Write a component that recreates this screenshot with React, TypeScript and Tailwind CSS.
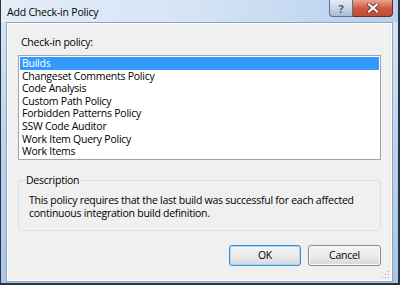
import React from "react";

const policies = [
  "Builds",
  "Changeset Comments Policy",
  "Code Analysis",
  "Custom Path Policy",
  "Forbidden Patterns Policy",
  "SSW Code Auditor",
  "Work Item Query Policy",
  "Work Items",
];

function ResizeGrip() {
  const dots = [
    [6, 0],
    [3, 3],
    [6, 3],
    [0, 6],
    [3, 6],
    [6, 6],
  ];
  return (
    <svg width="8" height="8" viewBox="0 0 8 8" className="absolute bottom-[2px] right-[2px]">
      {dots.map(([x, y]) => (
        <g key={`${x}-${y}`}>
          <rect x={x + 1} y={y + 1} width="1" height="1" fill="#ffffff" />
          <rect x={x} y={y} width="1" height="1" fill="#a0a0a0" />
        </g>
      ))}
    </svg>
  );
}

export default function App() {
  return (
    <div
      className="relative flex h-[285px] w-[400px] flex-col overflow-hidden border-b-[2px] border-l-[1px] border-r-[2px] border-[#2a3440] bg-gradient-to-b from-[#d9e7f6] via-[#bcd3ee] to-[#a9c6ea]"
      style={{ fontFamily: '"Open Sans", "Noto Sans", sans-serif' }}
    >
      {/* title bar */}
      <div className="flex h-[22px] shrink-0 items-start justify-between bg-gradient-to-r from-[#e4edf8] via-[#d4e3f4] to-[#b5cfee]">
        <span className="pl-[6px] pt-[5px] text-[10.5px] leading-[14px] tracking-[-0.2px] text-black">
          Add Check-in Policy
        </span>
        <div className="mr-[5px] flex">
          <button
            type="button"
            className="flex h-[17px] w-[24px] items-center justify-center rounded-bl-[4px] border border-t-0 border-[#5b6f86] bg-gradient-to-b from-[#e4ecf5] via-[#c8d6e6] to-[#a9bcd3] text-[11px] font-bold leading-none text-[#4a5a6e]"
          >
            ?
          </button>
          <button
            type="button"
            className="flex h-[17px] w-[40px] items-center justify-center rounded-br-[4px] border border-l-0 border-t-0 border-[#6b2a22] bg-gradient-to-b from-[#e8a493] via-[#cf5a42] to-[#c04a34]"
          >
            <svg width="12" height="10" viewBox="0 0 12 10">
              <path d="M2 1.5 L10 8.5 M10 1.5 L2 8.5" stroke="#5a2018" strokeWidth="3.6" strokeLinecap="square" />
              <path d="M2 1.5 L10 8.5 M10 1.5 L2 8.5" stroke="#ffffff" strokeWidth="2.2" strokeLinecap="square" />
            </svg>
          </button>
        </div>
      </div>

      {/* client area */}
      <div className="relative mx-[5px] mb-[1px] flex flex-1 flex-col border border-[#8ea5be] bg-[#f0f0f0] text-[10.5px] leading-[13px] tracking-[-0.25px] text-black">
        <div className="flex flex-1 flex-col border border-[#ffffff] px-[10px] pt-[12px]">
          <label className="pl-[3px]">Check-in policy:</label>
          <ul className="mt-[6px] h-[105px] border border-[#a3a3a3] bg-white pt-[1px] pl-[1px] pr-[1px] leading-[12.6px]">
            {policies.map((p, i) => (
              <li
                key={p}
                className={`pl-[2px] ${i === 0 ? "bg-[#3399ff] text-white" : ""}`}
              >
                {p}
              </li>
            ))}
          </ul>

          <fieldset className="mt-[14px] h-[57px] rounded-[3px] border border-[#d5dfe5] pl-[8px] pr-[6px]">
            <legend className="-ml-[2px] px-[1px]">Description</legend>
            <p className="mt-[7px] pl-[2px]">
              This policy requires that the last build was successful for each affected continuous
              integration build definition.
            </p>
          </fieldset>

          <div className="mt-[14px] flex justify-end gap-[7px]">
            <button
              type="button"
              className="h-[21px] w-[72px] rounded-[3px] border border-[#3c8fcf] bg-gradient-to-b from-[#f4f4f4] via-[#ececec] to-[#d8d8d8] shadow-[inset_0_0_0_1px_#9fdcf8]"
            >
              OK
            </button>
            <button
              type="button"
              className="h-[21px] w-[73px] rounded-[3px] border border-[#8a8a8a] bg-gradient-to-b from-[#f4f4f4] via-[#ececec] to-[#d8d8d8] shadow-[inset_0_0_0_1px_#fcfcfc]"
            >
              Cancel
            </button>
          </div>
        </div>
        <ResizeGrip />
      </div>
    </div>
  );
}
